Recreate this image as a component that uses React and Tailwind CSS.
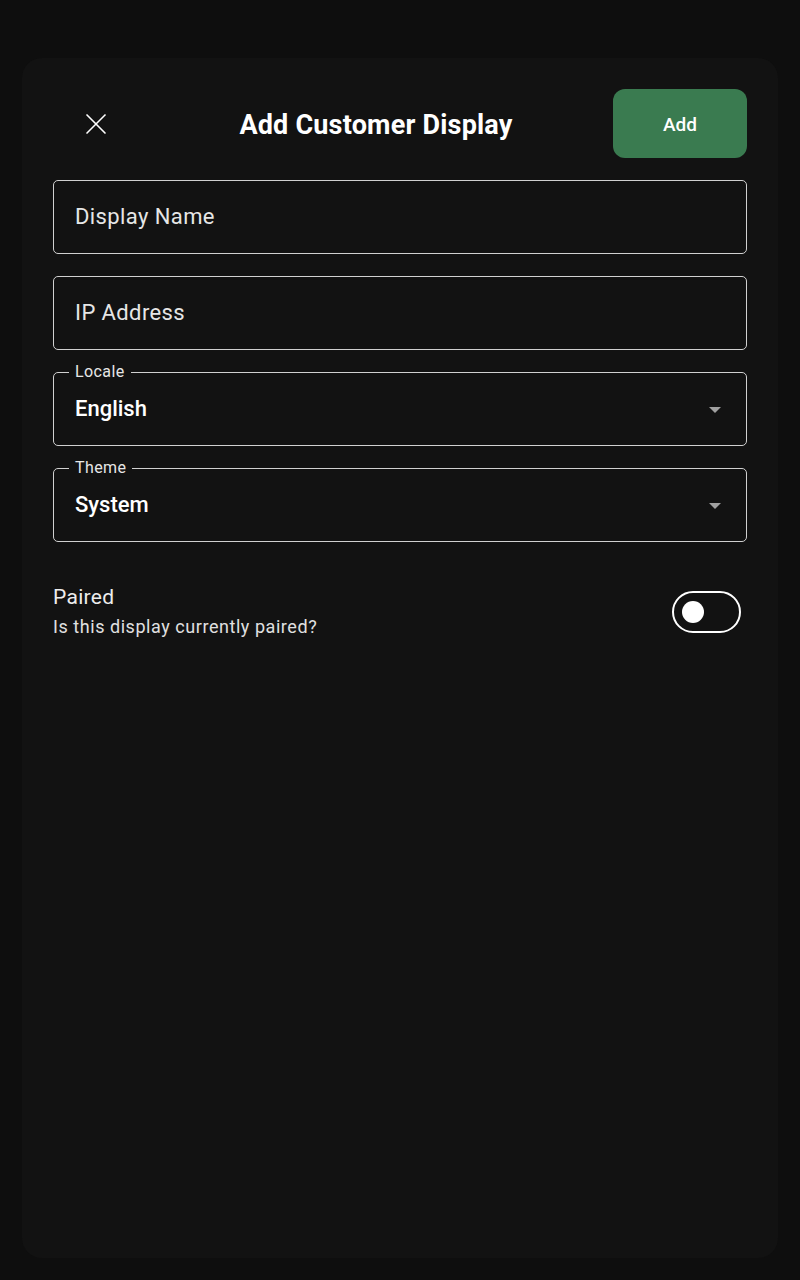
import { X } from "lucide-react";

function TextField({ placeholder }) {
  return (
    <div className="h-[74px] rounded-[5px] border-[1.5px] border-[#d0d0d0] flex items-center px-[21px]">
      <span className="text-[22px] tracking-[0.4px] text-[#e6e6e6] -mt-[1px]">{placeholder}</span>
    </div>
  );
}

function SelectField({ label, value }) {
  return (
    <div className="relative h-[74px] rounded-[5px] border-[1.5px] border-[#d0d0d0] flex items-center justify-between pl-[21px] pr-[24px]">
      <span className="absolute -top-[11px] left-[15px] px-[6px] bg-[#121212] text-[16px] leading-[20px] tracking-[0.4px] text-[#e6e6e6]">
        {label}
      </span>
      <span className="text-[22px] font-medium text-white -mt-[1px]">{value}</span>
      <svg width="14" height="8" viewBox="0 0 14 8" className="mt-[1px]">
        <path d="M1 1 L7 7 L13 1 Z" fill="#a0a0a0" />
      </svg>
    </div>
  );
}

export default function App() {
  return (
    <div
      className="w-[800px] h-[1280px] bg-[#0e0e0e] px-[22px] pt-[58px] pb-[22px]"
      style={{ fontFamily: "Roboto, 'Noto Sans', sans-serif" }}
    >
      <div className="h-full rounded-[20px] bg-[#121212] px-[31px] pt-[31px]">
        <div className="flex items-center h-[69px]">
          <button className="w-[86px] flex items-center justify-center text-white">
            <X className="w-[36px] h-[36px]" strokeWidth={1.1} />
          </button>
          <h1 className="flex-1 text-center text-[27px] font-bold text-white tracking-[0.2px] mt-[3px]">
            Add Customer Display
          </h1>
          <button className="w-[134px] h-[69px] rounded-[12px] bg-[#3a7b50] text-white text-[19px] font-medium pt-[3px]">
            Add
          </button>
        </div>

        <div className="mt-[22px] flex flex-col gap-[22px]">
          <TextField placeholder="Display Name" />
          <TextField placeholder="IP Address" />
          <SelectField label="Locale" value="English" />
          <SelectField label="Theme" value="System" />
        </div>

        <div className="mt-[41px] flex items-center justify-between pr-[6px]">
          <div>
            <div className="text-[21px] leading-[28px] tracking-[0.3px] text-[#ededed]">Paired</div>
            <div className="text-[18px] leading-[26px] tracking-[0.55px] text-[#e0e0e0] mt-[3px]">
              Is this display currently paired?
            </div>
          </div>
          <div className="w-[69px] h-[42px] rounded-full border-[2.5px] border-white flex items-center pl-[8px]">
            <div className="w-[22px] h-[22px] rounded-full bg-white" />
          </div>
        </div>
      </div>
    </div>
  );
}
